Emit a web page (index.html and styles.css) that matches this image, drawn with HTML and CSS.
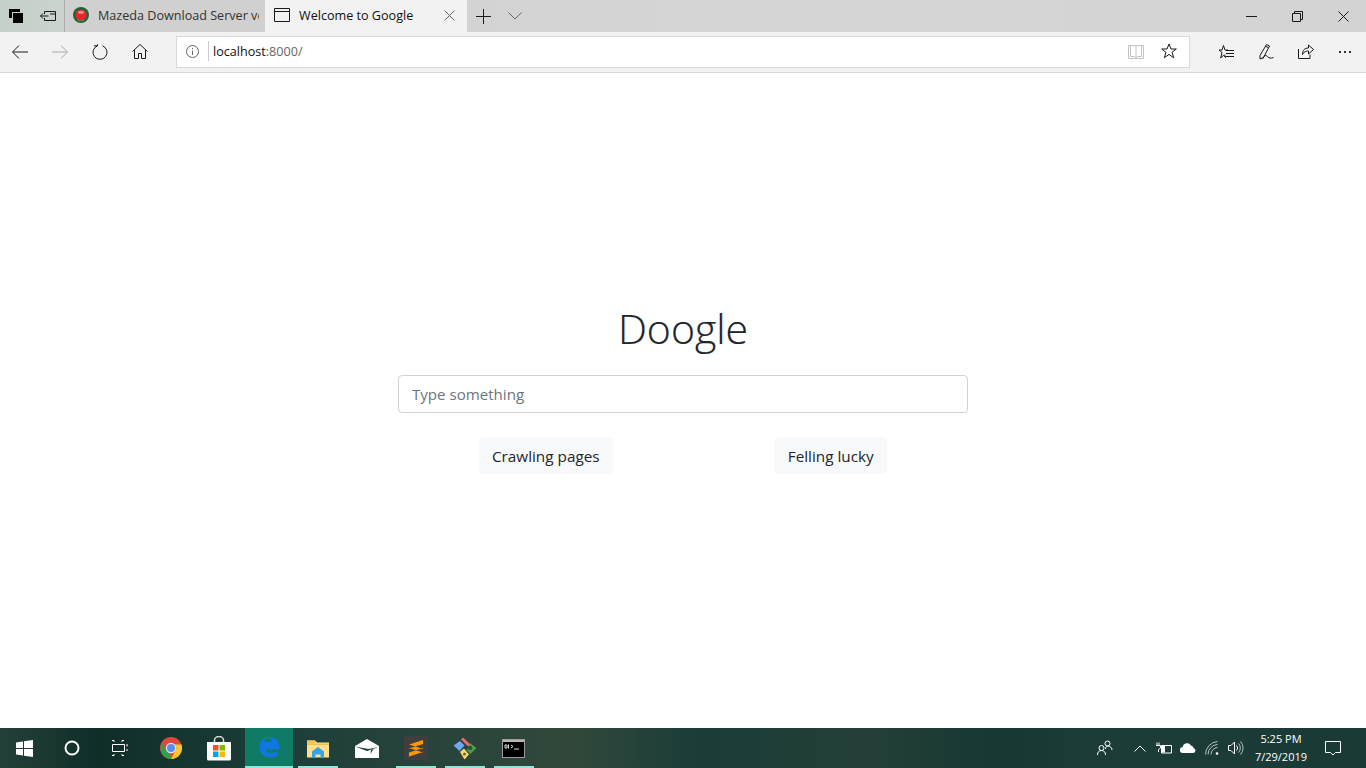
FILE: index.html
```html
<!DOCTYPE html>
<html lang="en">
<head>
<meta charset="utf-8">
<title>Welcome to Google</title>
<link rel="stylesheet" href="styles.css">
</head>
<body>
<div class="window">
  <header class="tabbar">
    <div class="tabtools">
      <span class="tool">
        <svg width="16" height="16" viewBox="0 0 16 16"><path class="fill" d="M1 1h11v3h-8v6h-3zM5 5h10v10h-10z"/></svg>
      </span>
      <span class="tool">
        <svg width="16" height="16" viewBox="0 0 16 16"><path class="line" d="M4.500 3.500h11v9h-11v-2.500M4.500 6v-2.500M.5 8h8M3 5.500l-2.500 2.500 2.500 2.500M10 6h5.500"/></svg>
      </span>
    </div>
    <div class="tab tab-off">
      <svg class="favicon" width="16" height="16" viewBox="0 0 16 16"><circle cx="8" cy="8" r="8" fill="#1f6236"/><circle cx="8" cy="8" r="5.600" fill="#e5262c"/><ellipse cx="8" cy="5.200" rx="3" ry="1.500" fill="#f98a8a"/><path d="M2.500 11.500a7 7 0 0 0 11 0 7 5 0 0 1-11 0z" fill="#5d9a70"/></svg>
      <span class="tabtext">Mazeda Download Server version</span>
    </div>
    <div class="tab tab-on">
      <svg class="pageicon" width="16" height="14" viewBox="0 0 16 14"><path class="line" d="M.5.500h15v13h-15zM.5 3.500h15"/></svg>
      <span class="tabtext">Welcome to Google</span>
      <svg class="tabclose" width="11" height="11" viewBox="0 0 11 11"><path class="line grey" d="M.5.500l10 10M10.500.500l-10 10"/></svg>
    </div>
    <span class="newtab"><svg width="15" height="15" viewBox="0 0 15 15"><path class="line" d="M7.500 0v15M0 7.500h15"/></svg></span>
    <span class="tabmenu"><svg width="14" height="8" viewBox="0 0 14 8"><path class="line grey" d="M.5.500l6.500 6.500 6.500-6.500"/></svg></span>
    <div class="wincontrols">
      <span class="winbtn"><svg width="11" height="11" viewBox="0 0 11 11"><path class="line" d="M0 5.500h11"/></svg></span>
      <span class="winbtn"><svg width="11" height="11" viewBox="0 0 11 11"><path class="line" d="M.5 2.500h8v8h-8zM2.500 2.500v-2h8v8h-2"/></svg></span>
      <span class="winbtn"><svg width="11" height="11" viewBox="0 0 11 11"><path class="line" d="M.5.500l10 10M10.500.500l-10 10"/></svg></span>
    </div>
  </header>

  <nav class="toolbar">
    <span class="navbtn"><svg width="16" height="14" viewBox="0 0 16 14"><path class="line" d="M16 7h-15M7 .5l-6.500 6.500 6.500 6.500"/></svg></span>
    <span class="navbtn"><svg width="16" height="14" viewBox="0 0 16 14"><path class="line light" d="M0 7h15M9 .5l6.500 6.500-6.500 6.500"/></svg></span>
    <span class="navbtn"><svg width="16" height="16" viewBox="0 0 16 16"><path class="line" d="M5.500 1.800a7 7 0 1 0 5 0M5.500 1.800v-1.500M5.500 1.800h-3.500"/></svg></span>
    <span class="navbtn"><svg width="16" height="15" viewBox="0 0 16 15"><path class="line" d="M.5 7.500l7.500-7 7.500 7M2.500 6v8.500h4v-5h3v5h4v-8.500"/></svg></span>
    <div class="address">
      <span class="infoicon"><svg width="13" height="13" viewBox="0 0 13 13"><circle class="line grey" cx="6.500" cy="6.500" r="6"/><path class="line grey" d="M6.500 5.500v4.500M6.500 3v1.200"/></svg></span>
      <span class="urltext">localhost<span class="urlmuted">:8000/</span></span>
      <span class="addricon"><svg width="16" height="15" viewBox="0 0 16 15"><path class="line pale" d="M.5 1.500h15v13h-15zM8 1.500v13M2.500 1.500v11h4l1.500 1 1.500-1h4v-11"/></svg></span>
      <span class="addricon star"><svg width="16" height="16" viewBox="0 0 16 16"><path class="line" d="M8 1l2 5h5.300l-4.300 3.300 1.700 5.500-4.700-3.400-4.700 3.400 1.700-5.500-4.300-3.300h5.300z"/></svg></span>
    </div>
    <div class="hubtools">
      <span class="hubbtn"><svg width="16" height="16" viewBox="0 0 16 16"><path class="line" d="M4.500 1.500l1.500 4.500h3M0 6h3l1.500-4.500M0 6l3 2.500-1.300 5.500 2.800-2.700 2 2.200-.8-3"/><path class="line" d="M7 6.500h8M7 9.500h8M7 12.500h8"/></svg></span>
      <span class="hubbtn"><svg width="16" height="16" viewBox="0 0 16 16"><path class="line" d="M8.500.5l3 1.500-6 11.500-3.500 1.500v-3.500zM7 2l3 1.500"/><path class="line" d="M4.500 15c2-3.500 3-4.500 5-2.500s3 2 6 1"/></svg></span>
      <span class="hubbtn"><svg width="16" height="16" viewBox="0 0 16 16"><path class="line" d="M.5 5v9.500h11.500v-4M15.500 5.500l-5-4.500v3c-4 0-6 2.500-6 6.500 1.500-3 3.500-3.500 6-3.500v3z"/></svg></span>
      <span class="hubbtn"><svg width="16" height="16" viewBox="0 0 16 16"><path class="dots" d="M2 7h2v2h-2zM7 7h2v2h-2zM12 7h2v2h-2z"/></svg></span>
    </div>
  </nav>

  <main class="page">
    <h1 class="brand">Doogle</h1>
    <form class="searchform">
      <input class="searchinput" type="text" placeholder="Type something">
      <div class="buttonrow">
        <button class="btn" type="button">Crawling pages</button>
        <button class="btn" type="button">Felling lucky</button>
      </div>
    </form>
  </main>

  <footer class="taskbar">
    <span class="task sys"><svg width="17" height="17" viewBox="0 0 17 17"><path class="white" d="M0 2.500l7-1v6.500h-7zM8 1.300l9-1.300v8h-9zM0 9h7v6.500l-7-1zM8 9h9v8l-9-1.300z"/></svg></span>
    <span class="task sys"><svg width="16" height="16" viewBox="0 0 16 16"><circle cx="8" cy="8" r="6.500" fill="none" stroke="#fff" stroke-width="2"/></svg></span>
    <span class="task sys sys-last"><svg width="17" height="16" viewBox="0 0 17 16"><path class="whiteline" d="M0 .5h2M10 .5h2M2 .500v1.500M10 .500v1.500M.5 4.500h12v7h-12zM0 15.500h2M10 15.500h2M2 14v1.500M10 14v1.500M15 4v2.500M15 9v2"/></svg></span>
    <span class="task"><svg width="22" height="22" viewBox="0 0 22 22"><circle cx="11" cy="11" r="11" fill="#e0463a"/><path d="M2 16.500l5.500-5.500 4 10.900a11 11 0 0 1-9.500-5.400z" fill="#30a24f"/><path d="M21.500 7.500h-10.500l5.500 3.500-5.500 11a11 11 0 0 0 10.500-14.500z" fill="#fbc52b"/><path d="M2 5.500l4 9 5.500 7.500a11 11 0 0 1-9.500-16.500z" fill="#30a24f"/><circle cx="11" cy="11" r="5.200" fill="#e8e8e8"/><circle cx="11" cy="11" r="4" fill="#5a8df0"/></svg></span>
    <span class="task task-store"><svg width="24" height="25" viewBox="0 0 24 25"><path d="M0 6h24v17a1.500 1.500 0 0 1-1.500 1.500h-21a1.500 1.500 0 0 1-1.500-1.500z" fill="#fff"/><path d="M7.500 6v-2a4.500 3.500 0 0 1 9 0v2" fill="none" stroke="#ddd" stroke-width="1.500"/><path d="M6 9h5.500v5.500h-5.500z" fill="#f25022"/><path d="M12.500 9h5.500v5.500h-5.500z" fill="#7fba00"/><path d="M6 15.500h5.500v5.500h-5.500z" fill="#00a4ef"/><path d="M12.500 15.500h5.500v5.500h-5.500z" fill="#ffb900"/></svg></span>
    <span class="task task-active"><svg width="22" height="22" viewBox="0 0 22 22"><path d="M11.500 1c6.500 0 10 4.500 10 10.500v2h-14c.5 3.500 6 5 12 1.500v5c-7 3-18 1.500-18-8.500 0-5 3.500-9 7-10-1.500 1.500-2.500 3-2.800 4.500h8.300c.2-2.500-1.500-4-3.500-4-2.800 0-6.500 2-8 4.500 1-3.500 4.500-5.500 9-5.500z" fill="#0f78e0"/></svg></span>
    <span class="task task-open"><svg width="22" height="19" viewBox="0 0 22 19"><path d="M0 1.500h8l2 2h12v15h-22z" fill="#ffe08a"/><path d="M0 4.500h22v1.500h-22z" fill="#f0c050"/><path d="M0 1.500h8v3h-8z" fill="#f5c451"/><path d="M5 12.500l6-4.500 6 4.500v6.500h-3.500v-3.500h-5v3.500h-3.500z" fill="#36a3e6"/></svg></span>
    <span class="task"><svg width="24" height="19" viewBox="0 0 24 19"><path d="M0 7l12-7 12 7v12h-24z" fill="#fff"/><path d="M0 7.500l12 4.500 12-4-10.500 2z" fill="#1d3a35"/><path d="M16 11l2.500-1-3 5z" fill="#1d3a35"/></svg></span>
    <span class="task task-open"><svg width="24" height="24" viewBox="0 0 24 24"><rect width="24" height="24" rx="2" fill="#3f3f40"/><path d="M19 4l-14 4.500v4l14-4.500zM5 8.500l14 4.500v3.500l-14-4.500zM19 12l-14 4.500v4l14-4.500z" fill="#ff9800"/></svg></span>
    <span class="task task-open"><svg width="24" height="24" viewBox="0 0 24 24"><path d="M8 3.500l2-2 7.500 7-2 2.200z" fill="#ef6a6a"/><path d="M7 5l4.500 4.500-5 5.500-6-5.500z" fill="#6ea8f5"/><path d="M17 7l6.500 5-6 6-4-4 3-3z" fill="#4f9c4d"/><path d="M7 16l4-3.500 5 6-4.500 5z" fill="#f2da6b"/><circle cx="17" cy="12" r="2.300" fill="#2d5a30"/><circle cx="11.500" cy="18" r="1.500" fill="#6b6a2a"/></svg></span>
    <span class="task task-open"><svg width="23" height="19" viewBox="0 0 23 19"><rect x=".5" y=".5" width="22" height="18" fill="#000" stroke="#9a9a9a"/><path d="M1 1h21v2h-21z" fill="#b5b5b5"/><path class="whiteline thin" d="M3 6h2v3h-2zM6.500 5.500v4M9 6l2 1.500-2 1.500M12 10h5"/></svg></span>

    <div class="tray">
      <span class="people"><svg width="16" height="16" viewBox="0 0 16 16"><circle class="whiteline" cx="4.500" cy="8" r="2.500"/><circle class="whiteline" cx="10.500" cy="3.500" r="2.500"/><path class="whiteline" d="M.5 15c0-3 1.500-4.500 4-4.500s4 1.500 4 4.500M8.500 9c0-2 1-3 2-3 2.500 0 4.500 1.500 4.500 4"/></svg></span>
      <span class="tray-chevron"><svg width="12" height="7" viewBox="0 0 12 7"><path class="whiteline" d="M.5 6.500l5.500-5.500 5.500 5.500"/></svg></span>
      <span class="trayicon"><svg width="16" height="12" viewBox="0 0 16 12"><path class="whiteline" d="M5.500 3.500h10v7.500h-10zM3 .5v2.500M1 .5v2.500M0 3.500h4.500v2.500l-2 1.500v2.500"/><path d="M6 4h3v6.500h-3z" fill="#fff"/></svg></span>
      <span class="trayicon"><svg width="16" height="10" viewBox="0 0 16 10"><path class="white" d="M3 10a3 3 0 0 1-.3-6 4.500 4.500 0 0 1 8.300-1.500 3.500 3.500 0 0 1 2.700 2.700 2.500 2.500 0 0 1-.2 4.800z"/></svg></span>
      <span class="trayicon"><svg width="15" height="14" viewBox="0 0 15 14"><path class="whiteline dim" d="M.5 13.500a13 13 0 0 1 12-13M3 13.500a10 10 0 0 1 9.500-10M6 13.500a7 7 0 0 1 6.500-7"/><circle cx="12" cy="12.500" r="1.300" fill="#fff"/></svg></span>
      <span class="trayicon"><svg width="16" height="14" viewBox="0 0 16 14"><path class="whiteline" d="M.5 4.500h2.500l3.500-3.500v12l-3.500-3.500h-2.500zM8.500 4.500a3.500 3.500 0 0 1 0 5"/><path class="whiteline dim" d="M10.500 2.500a6.500 6.500 0 0 1 0 9M12.500 .5a9.500 9.500 0 0 1 0 13"/></svg></span>
      <div class="clock"><span>5:25 PM</span><span>7/29/2019</span></div>
      <span class="notify"><svg width="16" height="15" viewBox="0 0 16 15"><path class="whiteline" d="M.5.500h15v11h-5l-2.500 2.500-2.500-2.500h-5z"/></svg></span>
    </div>
  </footer>
</div>
</body>
</html>
```

FILE: styles.css
```css
* { box-sizing: border-box; }
html, body { margin: 0; height: 100%; overflow: hidden; background: #fff; }
body { font-family: "Open Sans", "Noto Sans", "Liberation Sans", sans-serif; color: #212529; }
svg { display: block; }
.window { height: 768px; display: flex; flex-direction: column; }

.line { fill: none; stroke: #1a1a1a; stroke-width: 1; }
.line.grey { stroke: #666; }
.line.light { stroke: #a8a8a8; }
.line.pale { stroke: #c4c4c4; }
.fill { fill: #000; }
.dots { fill: #333; }
.white { fill: #fff; }
.whiteline { fill: none; stroke: #fff; stroke-width: 1; }
.whiteline.dim { stroke: #b8c4c2; }
.whiteline.thin { stroke: #ddd; }

.tabbar { height: 32px; flex: none; display: flex; align-items: stretch; background: linear-gradient(90deg, #cfcfcf 0%, #d6d6d6 60%, #d3d3d3 100%); }
.tabtools { width: 65px; display: flex; background: linear-gradient(90deg, #c3d0c8, #ccd3cd); border-right: 1px solid #a9aeaa; }
.tool { width: 32px; display: flex; align-items: center; justify-content: center; }
.tab { display: flex; align-items: center; font-size: 12.600px; white-space: nowrap; overflow: hidden; padding-bottom: 2px; }
.tab-off { width: 200px; padding-left: 8px; background: #d0d0d0; color: #333; }
.tab-on { width: 202px; padding-left: 9px; background: #f2f2f2; color: #111; }
.favicon { margin-right: 9px; flex: none; }
.pageicon { margin-right: 9px; flex: none; }
.tabtext { flex: 1; overflow: hidden; }
.tab-off .tabtext { margin-right: 6px; }
.tabclose { margin-right: 12px; flex: none; }
.newtab { width: 32px; display: flex; align-items: center; justify-content: center; }
.tabmenu { width: 32px; display: flex; align-items: center; justify-content: center; }
.wincontrols { margin-left: auto; display: flex; }
.winbtn { width: 46px; display: flex; align-items: center; justify-content: center; }

.toolbar { height: 41px; flex: none; display: flex; align-items: center; background: #f2f2f2; border-bottom: 1px solid #d9d9d9; padding-bottom: 1px; }
.navbtn { width: 40px; height: 32px; display: flex; align-items: center; justify-content: center; }
.address { width: 1014px; height: 32px; margin-left: 16px; display: flex; align-items: center; background: #fff; border: 1px solid #d9d9d9; padding-bottom: 1px; }
.infoicon { width: 32px; padding-left: 9px; height: 20px; display: flex; align-items: center; border-right: 1px solid #ccc; }
.urltext { font-size: 12.600px; margin-left: 4px; color: #111; flex: 1; }
.urlmuted { color: #666; }
.addricon { width: 32px; display: flex; justify-content: center; }
.addricon.star { width: 34px; margin-right: 3px; }
.hubtools { display: flex; margin-left: 17px; }
.hubbtn { width: 39.500px; display: flex; justify-content: center; }

.page { flex: 1; display: flex; flex-direction: column; align-items: center; padding-top: 226px; background: #fff; }
.brand { margin: 0 0 22px; font-size: 41px; line-height: 58px; font-weight: 300; color: #212529; height: 54px; -webkit-text-stroke: .2px #212529; }
.searchform { width: 570px; display: flex; flex-direction: column; gap: 24px; }
.searchinput { width: 100%; height: 38px; padding: 6px 13px; font: 400 15.100px/24px "Open Sans", sans-serif; color: #495057; background: #fff; border: 1px solid #ced4da; border-radius: 4px; outline: none; }
.searchinput::placeholder { color: #6c757d; opacity: 1; }
.buttonrow { display: flex; justify-content: space-around; }
.btn { width: 134px; height: 37px; padding: 0; font: 400 15.300px/24px "Open Sans", sans-serif; color: #212529; background: #f8f9fa; border: 1px solid #f8f9fa; border-radius: 4px; }
.btn + .btn { width: 113px; }

.taskbar { height: 40px; flex: none; display: flex; align-items: stretch; background: linear-gradient(90deg, #243f3a 0, #0f2e28 100px, #1e3f3a 300px, #32483b 570px, #1a3d38 700px, #243f37 870px, #153833 1000px, #1c3c37 1090px, #1a3a36 1366px); }
.task { width: 49px; display: flex; align-items: center; justify-content: center; }
.task.sys { width: 48px; }
.task.sys-last { margin-right: 2px; }
.task-store { width: 50px; padding-right: 2px; }
.task.task-active { width: 48px; background: #0f7a66; border-bottom: 2px solid #8ee8d6; }
.task-open { position: relative; }
.task-open::after { content: ""; position: absolute; left: 5px; right: 4px; bottom: 0; height: 2px; background: #8ee8d6; }
.tray { margin-left: auto; display: flex; align-items: center; color: #fff; }
.people { width: 16px; margin-right: 21px; }
.tray-chevron { width: 12px; margin-right: 6px; }
.trayicon { width: 24px; display: flex; justify-content: center; }
.clock { width: 62px; margin-left: 2px; display: flex; flex-direction: column; align-items: center; font-size: 11px; line-height: 18px; }
.notify { width: 16px; margin: 0 25px 0 13px; }
```
